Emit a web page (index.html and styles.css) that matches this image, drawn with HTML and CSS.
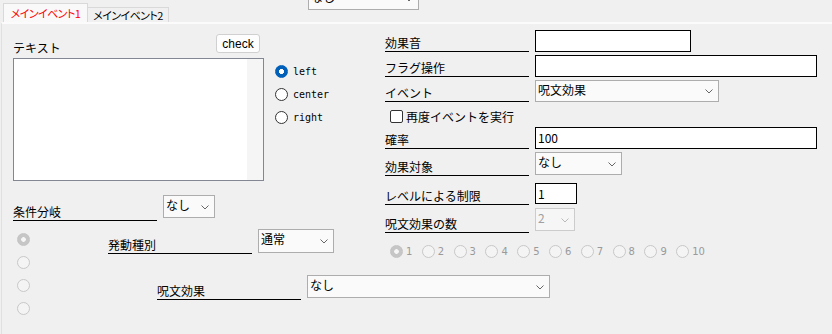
FILE: index.html
```html
<!DOCTYPE html>
<html lang="ja">
<head>
    <meta charset="UTF-8">
    <title>イベント編集</title>
    <link rel="stylesheet" href="styles.css">
</head>
<body>

    <div class="tabstrip">
        <div class="tab active">メインイベント1</div>
        <div class="tab">メインイベント2</div>
        <div class="combo top-combo"><span>なし</span><svg width="8" height="5"><path d="M0.5 0.5 L4 4 L7.5 0.5" fill="none" stroke="#666"/></svg></div>
    </div>

    <div class="page">
        <div class="left">
            <div class="text-row">
                <div class="text-block">
                    <div class="text-head">
                        <span class="text-label">テキスト</span>
                        <button class="btn">check</button>
                    </div>
                    <div class="textbox"><div class="scroll"></div></div>
                </div>
                <div class="align-group">
                    <div class="opt"><span class="rb on"></span>left</div>
                    <div class="opt"><span class="rb"></span>center</div>
                    <div class="opt"><span class="rb"></span>right</div>
                </div>
            </div>

            <div class="field cond">
                <span class="label">条件分岐</span>
                <div class="combo w-cond"><span>なし</span><svg width="8" height="5"><path d="M0.5 0.5 L4 4 L7.5 0.5" fill="none" stroke="#666"/></svg></div>
            </div>

            <div class="bottom">
                <div class="radio-col">
                    <div class="dot-row"><span class="rb dis on"></span></div>
                    <div class="dot-row"><span class="rb dis"></span></div>
                    <div class="dot-row"><span class="rb dis"></span></div>
                    <div class="dot-row"><span class="rb dis"></span></div>
                </div>
                <div class="stagger">
                    <div class="field kind">
                        <span class="label">発動種別</span>
                        <div class="combo w-kind"><span>通常</span><svg width="8" height="5"><path d="M0.5 0.5 L4 4 L7.5 0.5" fill="none" stroke="#666"/></svg></div>
                    </div>
                    <div class="field spell">
                        <span class="label">呪文効果</span>
                        <div class="combo w-spell"><span>なし</span><svg width="8" height="5"><path d="M0.5 0.5 L4 4 L7.5 0.5" fill="none" stroke="#666"/></svg></div>
                    </div>
                </div>
            </div>
        </div>

        <div class="right">
            <div class="field r1">
                <span class="label">効果音</span>
                <div class="input w-sound"></div>
            </div>
            <div class="field">
                <span class="label">フラグ操作</span>
                <div class="input w-full"></div>
            </div>
            <div class="field">
                <span class="label">イベント</span>
                <div class="combo w-event"><span>呪文効果</span><svg width="8" height="5"><path d="M0.5 0.5 L4 4 L7.5 0.5" fill="none" stroke="#666"/></svg></div>
            </div>
            <div class="check-row"><span class="cb"></span>再度イベントを実行</div>
            <div class="field r5">
                <span class="label">確率</span>
                <div class="input w-full">100</div>
            </div>
            <div class="field r6">
                <span class="label">効果対象</span>
                <div class="combo w-target"><span>なし</span><svg width="8" height="5"><path d="M0.5 0.5 L4 4 L7.5 0.5" fill="none" stroke="#666"/></svg></div>
            </div>
            <div class="field r7">
                <span class="label">レベルによる制限</span>
                <div class="input w-level">1</div>
            </div>
            <div class="field r8">
                <span class="label">呪文効果の数</span>
                <div class="combo disabled w-count"><span>2</span><svg width="8" height="5"><path d="M0.5 0.5 L4 4 L7.5 0.5" fill="none" stroke="#bbb"/></svg></div>
            </div>
            <div class="num-row">
                <div class="num"><span class="rb dis on"></span>1</div>
                <div class="num"><span class="rb dis"></span>2</div>
                <div class="num"><span class="rb dis"></span>3</div>
                <div class="num"><span class="rb dis"></span>4</div>
                <div class="num"><span class="rb dis"></span>5</div>
                <div class="num"><span class="rb dis"></span>6</div>
                <div class="num"><span class="rb dis"></span>7</div>
                <div class="num"><span class="rb dis"></span>8</div>
                <div class="num"><span class="rb dis"></span>9</div>
                <div class="num"><span class="rb dis"></span>10</div>
            </div>
        </div>
    </div>

</body>
</html>
```

FILE: styles.css
```css
* {
    box-sizing: border-box;
}
body {
    margin: 0;
    width: 832px;
    height: 334px;
    overflow: hidden;
    background: #f0f0f0;
    font-family: "Noto Sans CJK JP", "Noto Sans", sans-serif;
    font-size: 12px;
    color: #000;
}
.tabstrip {
    display: flex;
    align-items: flex-end;
    height: 22px;
    padding-left: 3px;
}
.tab {
    width: 81px;
    height: 15px;
    border: 1px solid #d9d9d9;
    border-bottom: none;
    background: #f0f0f0;
    text-align: center;
    white-space: nowrap;
    font-size: 11px;
    font-feature-settings: "palt";
    letter-spacing: -0.6px;
    line-height: 14px;
}
.tab.active {
    width: 85px;
    height: 19px;
    line-height: 18px;
    color: #f00;
    background: #f9f9f9;
}
.tab + .tab {
    border-left: none;
}
.top-combo {
    width: 111px;
    margin-left: 139px;
    margin-top: -13px;
    align-self: flex-start;
}
.page {
    display: flex;
    height: 312px;
    margin-left: 1px;
    border-left: 1px solid #e0e0e0;
    border-top: 2px solid #fbfbfb;
}
.left {
    width: 383px;
    flex-shrink: 0;
    padding-left: 11px;
}
.text-row {
    display: flex;
    margin-top: 10px;
}
.text-block {
    width: 251px;
}
.text-head {
    display: flex;
    justify-content: space-between;
    height: 24px;
}
.text-label {
    align-self: flex-end;
    line-height: 16px;
    padding-bottom: 2px;
}
.btn {
    width: 44px;
    height: 19px;
    margin-right: 4px;
    padding: 0;
    border: 1px solid #d0d0d0;
    border-radius: 3px;
    background: #fdfdfd;
    font: 12px "Liberation Sans", sans-serif;
    line-height: 16px;
    color: #000;
}
.textbox {
    display: flex;
    justify-content: flex-end;
    height: 123px;
    border: 1px solid #838793;
    background: #fff;
}
.scroll {
    width: 16px;
    background: #f5f5f5;
}
.align-group {
    margin-left: 11px;
    margin-top: 26px;
}
.opt {
    display: flex;
    align-items: center;
    gap: 5px;
    height: 23px;
    font: 10px "DejaVu Sans Mono", monospace;
}
.rb {
    width: 13px;
    height: 13px;
    border: 1px solid #333;
    border-radius: 50%;
    background: #fff;
    flex-shrink: 0;
}
.rb.on {
    border-color: #005fb8;
    background: radial-gradient(circle, #fff 0 2.2px, #005fb8 2.8px);
}
.rb.dis {
    border-color: #c8c8c8;
    background: #f4f4f4;
}
.rb.dis.on {
    border-color: #c4c4c4;
    background: radial-gradient(circle, #f6f6f6 0 2px, #c6c6c6 2.6px);
}
.field {
    display: flex;
    align-items: flex-end;
    gap: 6px;
}
.label {
    width: 144px;
    flex-shrink: 0;
    line-height: 16px;
    border-bottom: 1px solid #000;
    white-space: nowrap;
}
.combo {
    display: flex;
    justify-content: space-between;
    align-self: flex-start;
    height: 23px;
    padding: 1px 5px 0 2px;
    border: 1px solid #adadad;
    background: #fafafa;
    line-height: 16px;
}
.combo svg {
    align-self: center;
    flex-shrink: 0;
}
.combo.disabled {
    border-color: #cccccc;
    background: #f6f6f6;
    color: #a0a0a0;
}
.input {
    height: 22px;
    padding: 0 2px;
    border: 1px solid #000;
    background: #fff;
    line-height: 19px;
}
.cond {
    height: 26px;
    margin-top: 14px;
}
.w-cond { width: 52px; }
.bottom {
    display: flex;
    margin-top: 7px;
}
.radio-col {
    margin-left: 4px;
}
.dot-row {
    display: flex;
    align-items: center;
    height: 23px;
}
.stagger {
    margin-left: 78px;
}
.kind {
    height: 25px;
    margin-top: 1px;
}
.w-kind {
    width: 76px;
    height: 24px;
}
.spell {
    height: 25px;
    margin-top: 21px;
    margin-left: 49px;
}
.w-spell { width: 243px; }
.right {
    padding-top: 6px;
}
.right .field {
    height: 22px;
    margin-top: 3px;
}
.right .r1 { margin-top: 0; }
.w-sound { width: 156px; }
.w-full { width: 282px; }
.w-event { width: 184px; height: 22px; }
.check-row {
    display: flex;
    align-items: center;
    gap: 3px;
    height: 21px;
    margin-top: 4px;
    margin-left: 5px;
}
.cb {
    width: 13px;
    height: 13px;
    border: 1px solid #333;
    border-radius: 2px;
    background: #fff;
}
.right .r5 { margin-top: 0; }
.right .r6 { height: 24px; }
.w-target { width: 87px; }
.right .r7 {
    height: 22px;
    margin-top: 7px;
}
.w-level {
    width: 42px;
    height: 21px;
    align-self: flex-start;
}
.right .r8 { height: 25px; }
.w-count { width: 40px; }
.num-row {
    display: flex;
    height: 15px;
    margin-top: 11px;
    margin-left: 5px;
}
.num {
    display: flex;
    align-items: center;
    gap: 3px;
    width: 31.8px;
    flex-shrink: 0;
    font: 10px "DejaVu Sans", sans-serif;
    color: #9a9a9a;
}
```
